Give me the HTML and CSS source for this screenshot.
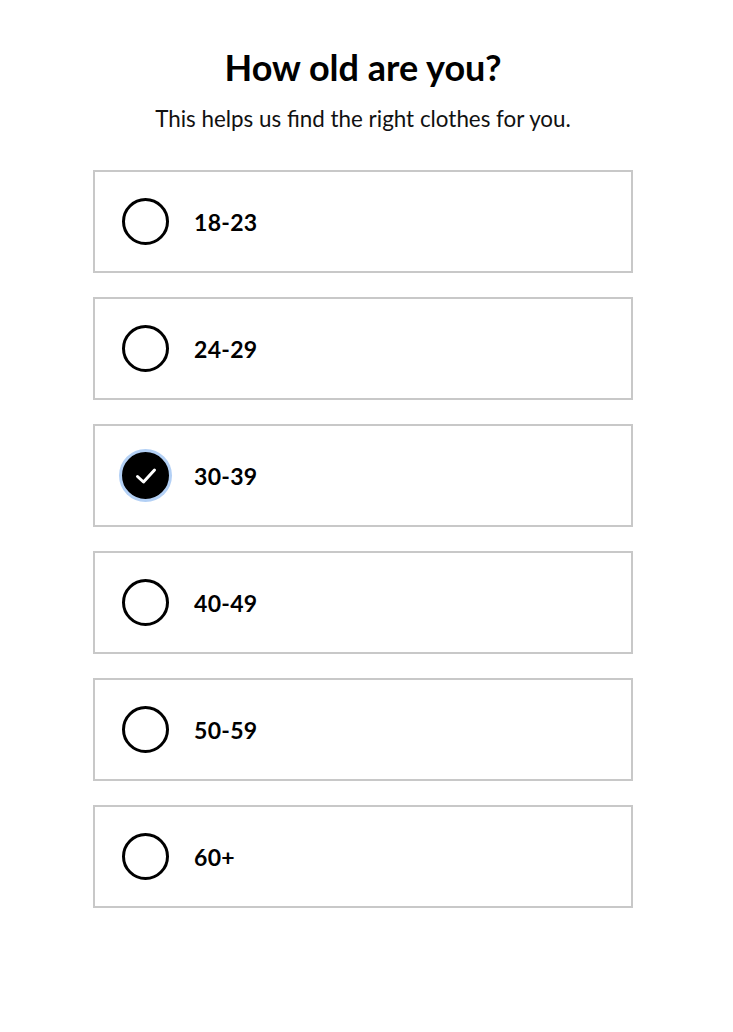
FILE: index.html
```html
<!DOCTYPE html>
<html>
<head>
<meta charset="utf-8">
<link rel="stylesheet" href="styles.css">
</head>
<body>
<main class="page">
  <h1 class="title">How old are you?</h1>
  <p class="subtitle">This helps us find the right clothes for you.</p>
  <div class="options">
    <div class="option"><span class="radio"></span><span class="label">18-23</span></div>
    <div class="option"><span class="radio"></span><span class="label">24-29</span></div>
    <div class="option"><span class="radio checked"><svg width="26" height="26" viewBox="0 0 26 26"><path d="M4.5 13.5 L10.5 19 L21.5 7" fill="none" stroke="#fff" stroke-width="3" stroke-linecap="round" stroke-linejoin="round"/></svg></span><span class="label">30-39</span></div>
    <div class="option"><span class="radio"></span><span class="label">40-49</span></div>
    <div class="option"><span class="radio"></span><span class="label">50-59</span></div>
    <div class="option"><span class="radio"></span><span class="label">60+</span></div>
  </div>
</main>
</body>
</html>
```
FILE: styles.css
```css
html, body {
  margin: 0;
  padding: 0;
  background: #fff;
}
.page {
  width: 540px;
  margin-left: 93px;
  padding-top: 44px;
  font-family: "Lato", "Noto Sans", sans-serif;
  color: #000;
}
.title {
  margin: 0;
  text-align: center;
  font-size: 36px;
  line-height: 46px;
  font-weight: 700;
}
.subtitle {
  margin: 15px 0 0;
  text-align: center;
  font-size: 22.4px;
  line-height: 28px;
  color: #111;
}
.options {
  margin-top: 37px;
  display: flex;
  flex-direction: column;
  gap: 24px;
}
.option {
  box-sizing: border-box;
  height: 103px;
  border: 2px solid #c8c8c8;
  display: flex;
  align-items: center;
  padding-left: 27px;
}
.radio {
  box-sizing: border-box;
  width: 47px;
  height: 47px;
  border: 3px solid #000;
  border-radius: 50%;
  display: flex;
  align-items: center;
  justify-content: center;
  flex: none;
}
.radio.checked {
  background: #000;
  box-shadow: 0 0 0 3px #b3d0f5;
  border-color: #000;
}
.label {
  margin-left: 25px;
  font-size: 23px;
  font-weight: 700;
  letter-spacing: 0.3px;
}
```
